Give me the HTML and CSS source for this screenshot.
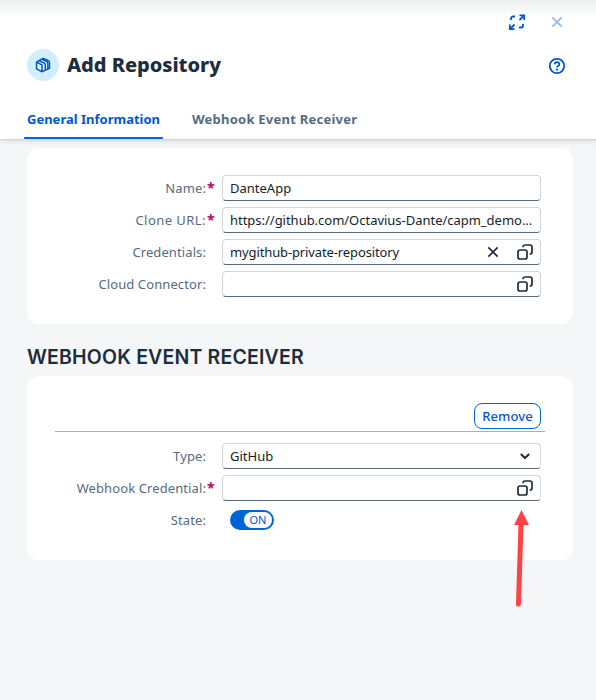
FILE: index.html
```html
<!DOCTYPE html>
<html lang="en">
<head>
<meta charset="utf-8">
<title>Add Repository</title>
<link rel="stylesheet" href="styles.css">
</head>
<body>
<svg class="defs" width="0" height="0" aria-hidden="true">
  <symbol id="value-help" viewBox="0 0 16 16">
    <rect x="1" y="6" width="9" height="9" rx="2"/>
    <path d="M6 3.200V3a2 2 0 0 1 2-2h5a2 2 0 0 1 2 2v5a2 2 0 0 1-2 2h-.4"/>
  </symbol>
</svg>
<header class="header">
  <div class="window-actions">
    <svg class="icon" width="18" height="18" viewBox="0 0 18 18"><path d="M3 7V5.500a2 2 0 0 1 2-2h2M15 11v1.500a2 2 0 0 1-2 2h-2M11.500 7l4-4M6.500 11.500l-4 4"/><path d="M11.500 2.300h4.700V7M1.800 11.500v4.700h4.700"/></svg>
    <svg class="icon close" width="18" height="18" viewBox="0 0 18 18"><path d="M4.300 4.300l9.400 9.400M13.700 4.300l-9.400 9.400"/></svg>
  </div>
  <div class="title-row">
    <span class="avatar"><svg class="icon box" width="16" height="16" viewBox="0 0 16 16"><path d="M1.500 5.200 7 7.800v7l-5.500-3zM1.500 5.200 8 1.400l4 1.400 2.500 2v6.500L7 14.600M4.500 3.800 9.500 6.200q.8.500.8 1.500v5.500M7 2.300l4.500 2.100q1.300.7 1.300 2v5.600"/></svg></span>
    <h1>Add Repository</h1>
    <svg class="icon help" width="18" height="18" viewBox="0 0 18 18"><circle cx="9" cy="9" r="7.200"/><path d="M6.700 7.200a2.300 2.100 0 1 1 3.500 1.800c-.8.500-1.200.8-1.200 1.500"/><circle class="dot" cx="9" cy="12.700" r="1.100"/></svg>
  </div>
  <nav class="tabs">
    <a class="tab active">General Information</a>
    <a class="tab second">Webhook Event Receiver</a>
  </nav>
</header>
<main>
  <section class="card general">
    <div class="row"><label>Name:</label><b class="req">*</b><div class="field"><span>DanteApp</span></div></div>
    <div class="row"><label class="wide">Clone URL:</label><b class="req">*</b><div class="field"><span class="url">https://github.com/Octavius-Dante/capm_demo...</span></div></div>
    <div class="row"><label>Credentials:</label><b class="req"></b><div class="field"><span class="credential">mygithub-private-repository</span>
      <svg class="glyph clear" width="16" height="16" viewBox="0 0 16 16"><path d="M3.300 3.300l9.400 9.400M12.700 3.300l-9.400 9.400"/></svg>
      <svg class="glyph" width="16" height="16"><use href="#value-help"/></svg></div></div>
    <div class="row"><label>Cloud Connector:</label><b class="req"></b><div class="field"><span></span><svg class="glyph" width="16" height="16"><use href="#value-help"/></svg></div></div>
  </section>
  <h2>WEBHOOK EVENT RECEIVER</h2>
  <section class="card webhook">
    <div class="toolbar"><button>Remove</button></div>
    <div class="row"><label>Type:</label><b class="req"></b><div class="field"><span>GitHub</span><svg class="glyph chevron" width="16" height="16" viewBox="0 0 16 16"><path d="M3.800 6 8 10l4.200-4"/></svg></div></div>
    <div class="row"><label>Webhook Credential:</label><b class="req">*</b><div class="field"><span></span><svg class="glyph" width="16" height="16"><use href="#value-help"/></svg></div></div>
    <div class="row"><label>State:</label><b class="req"></b><div class="switch"><span>ON</span></div></div>
  </section>
</main>
<svg class="pointer" width="20" height="100" viewBox="0 0 20 100"><path class="shaft" d="M6.500 94 9 14"/><path class="head" d="M9.500 0 17 15H2z"/></svg>
</body>
</html>
```

FILE: styles.css
```css
* { box-sizing: border-box; }
body {
  margin: 0;
  height: 700px;
  overflow: hidden;
  position: relative;
  background: #f5f6f7;
  font: 13px/20px "Noto Sans", sans-serif;
  color: #131e29;
}
.defs { position: absolute; }
svg { display: block; flex: none; fill: none; }
.header {
  height: 140px;
  background: linear-gradient(#eceef0, #fff 16px);
  border-bottom: 1px solid #d2d5d8;
  box-shadow: 0 1px 5px rgba(34, 53, 72, .16);
}
.icon { stroke: #0057d2; stroke-width: 1.8; }
.window-actions { display: flex; justify-content: flex-end; gap: 22px; padding: 13px 30px 0 0; height: 49px; }
.close { opacity: .4; }
.title-row { display: flex; align-items: center; height: 32px; padding: 0 30px 0 27px; }
.avatar { display: grid; place-items: center; width: 32px; height: 32px; border-radius: 50%; background: #d1efff; }
.box { stroke: #0050c8; stroke-width: 1.400; stroke-linejoin: round; }
h1 { margin: 0 auto 0 8px; font: 800 20px/32px "Noto Sans", sans-serif; color: #1d2d3e; letter-spacing: -.04px; }
.help { margin-top: 2px; }
.dot { fill: #0057d2; stroke: none; }
.tabs { display: flex; gap: 26px; padding-left: 24px; height: 58px; }
.tab { padding: 28px 3px 0; font-weight: 700; color: #556b82; white-space: nowrap; }
.tab.active { width: 139px; color: #0057d2; border-bottom: 2px solid #0064d9; border-radius: 0 0 1px 1px; }
.tab.second { letter-spacing: .24px; }
main { padding: 8px 23px 0 27px; }
.card { background: #fff; border-radius: 12px; padding-right: 32px; }
.general { height: 176px; padding-top: 24px; }
.webhook { height: 184px; padding-top: 24px; }
.row { display: flex; align-items: center; height: 32px; }
label { width: 179px; text-align: right; color: #556b82; white-space: nowrap; letter-spacing: .1px; }
label.wide { letter-spacing: .45px; }
.req { width: 16px; padding-left: 1px; color: #ba066c; font-size: 14px; }
.field {
  flex: 1;
  display: flex;
  align-items: center;
  min-width: 0;
  height: 26px;
  padding: 0 7px;
  border: 1px solid #d2d6dc;
  border-bottom-color: #556b81;
  border-radius: 4px;
}
.field span { flex: 1; white-space: nowrap; }
.field .url { letter-spacing: -.02px; }
.field .credential { letter-spacing: -.12px; }
.glyph { stroke: #1d2d3e; stroke-width: 1.700; overflow: visible; }
.clear { margin-right: 16px; }
.chevron { stroke-width: 2; }
h2 { margin: 20px 0 6px; font: 600 19.500px/26px Inter, sans-serif; color: #1d2d3e; white-space: nowrap; letter-spacing: .18px; }
.toolbar { display: flex; justify-content: flex-end; height: 32px; margin: 0 -4px 8px 28px; padding: 3px 4px 0 0; border-bottom: 1px solid #a8b2bd; }
button { width: 67px; height: 26px; padding: 0; border: 1px solid #0064d9; border-radius: 8px; background: #fff; color: #0057d2; font: 500 13px/20px "Noto Sans", sans-serif; letter-spacing: .1px; }
.switch { display: flex; justify-content: flex-end; width: 44px; height: 20px; margin-left: 8px; padding: 2px; border-radius: 10px; background: #0064d9; }
.switch span { width: 28px; border-radius: 8px; background: #fff; color: #0057d2; text-align: center; font-size: 11px; line-height: 16px; }
.pointer { position: absolute; left: 512px; top: 510px; }
.shaft { stroke: #ff4245; stroke-width: 5; stroke-linecap: round; }
.head { fill: #ff4245; }
```
